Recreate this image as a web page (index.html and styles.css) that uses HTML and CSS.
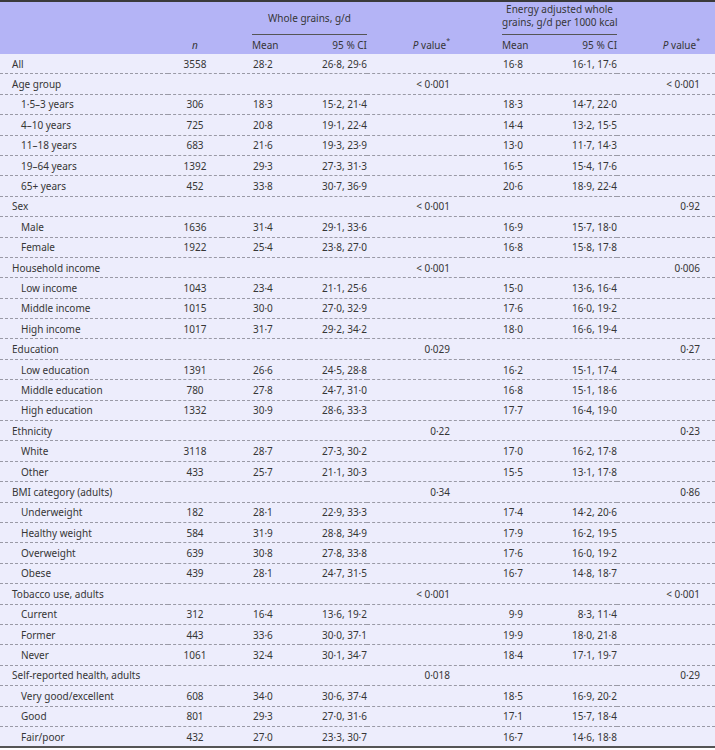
FILE: index.html
```html
<!DOCTYPE html>
<html>
<head>
<meta charset="utf-8">
<link rel="stylesheet" href="styles.css">
</head>
<body>
<table class="t">
<colgroup>
<col class="c-label"><col class="c-n"><col class="c-mean1"><col class="c-ci1"><col class="c-p1"><col class="c-mean2"><col class="c-ci2"><col class="c-p2">
</colgroup>
<thead>
<tr class="h1">
<th></th><th></th>
<th colspan="2" class="grp g1"><div class="grp-in one">Whole grains, g/d</div></th>
<th></th>
<th colspan="2" class="grp g2"><div class="grp-in two">Energy adjusted whole<br>grains, g/d per 1000 kcal</div></th>
<th></th>
</tr>
<tr class="h2">
<th></th><th class="n"><i>n</i></th><th class="mean1">Mean</th><th class="ci">95 % CI</th><th class="p1"><i>P</i> value<sup>*</sup></th><th class="mean2">Mean</th><th class="ci">95 % CI</th><th class="p2"><i>P</i> value<sup>*</sup></th>
</tr>
</thead>
<tbody>
<tr><td class="lab">All</td><td class="n">3558</td><td class="mean1">28·2</td><td class="ci">26·8, 29·6</td><td class="p1"></td><td class="mean2">16·8</td><td class="ci">16·1, 17·6</td><td class="p2"></td></tr>
<tr><td class="lab">Age group</td><td></td><td></td><td></td><td class="p1">&lt; 0·001</td><td></td><td></td><td class="p2">&lt; 0·001</td></tr>
<tr><td class="lab sub">1·5–3 years</td><td class="n">306</td><td class="mean1">18·3</td><td class="ci">15·2, 21·4</td><td class="p1"></td><td class="mean2">18·3</td><td class="ci">14·7, 22·0</td><td class="p2"></td></tr>
<tr><td class="lab sub">4–10 years</td><td class="n">725</td><td class="mean1">20·8</td><td class="ci">19·1, 22·4</td><td class="p1"></td><td class="mean2">14·4</td><td class="ci">13·2, 15·5</td><td class="p2"></td></tr>
<tr><td class="lab sub">11–18 years</td><td class="n">683</td><td class="mean1">21·6</td><td class="ci">19·3, 23·9</td><td class="p1"></td><td class="mean2">13·0</td><td class="ci">11·7, 14·3</td><td class="p2"></td></tr>
<tr><td class="lab sub">19–64 years</td><td class="n">1392</td><td class="mean1">29·3</td><td class="ci">27·3, 31·3</td><td class="p1"></td><td class="mean2">16·5</td><td class="ci">15·4, 17·6</td><td class="p2"></td></tr>
<tr><td class="lab sub">65+ years</td><td class="n">452</td><td class="mean1">33·8</td><td class="ci">30·7, 36·9</td><td class="p1"></td><td class="mean2">20·6</td><td class="ci">18·9, 22·4</td><td class="p2"></td></tr>
<tr><td class="lab">Sex</td><td></td><td></td><td></td><td class="p1">&lt; 0·001</td><td></td><td></td><td class="p2">0·92</td></tr>
<tr><td class="lab sub">Male</td><td class="n">1636</td><td class="mean1">31·4</td><td class="ci">29·1, 33·6</td><td class="p1"></td><td class="mean2">16·9</td><td class="ci">15·7, 18·0</td><td class="p2"></td></tr>
<tr><td class="lab sub">Female</td><td class="n">1922</td><td class="mean1">25·4</td><td class="ci">23·8, 27·0</td><td class="p1"></td><td class="mean2">16·8</td><td class="ci">15·8, 17·8</td><td class="p2"></td></tr>
<tr><td class="lab">Household income</td><td></td><td></td><td></td><td class="p1">&lt; 0·001</td><td></td><td></td><td class="p2">0·006</td></tr>
<tr><td class="lab sub">Low income</td><td class="n">1043</td><td class="mean1">23·4</td><td class="ci">21·1, 25·6</td><td class="p1"></td><td class="mean2">15·0</td><td class="ci">13·6, 16·4</td><td class="p2"></td></tr>
<tr><td class="lab sub">Middle income</td><td class="n">1015</td><td class="mean1">30·0</td><td class="ci">27·0, 32·9</td><td class="p1"></td><td class="mean2">17·6</td><td class="ci">16·0, 19·2</td><td class="p2"></td></tr>
<tr><td class="lab sub">High income</td><td class="n">1017</td><td class="mean1">31·7</td><td class="ci">29·2, 34·2</td><td class="p1"></td><td class="mean2">18·0</td><td class="ci">16·6, 19·4</td><td class="p2"></td></tr>
<tr><td class="lab">Education</td><td></td><td></td><td></td><td class="p1">0·029</td><td></td><td></td><td class="p2">0·27</td></tr>
<tr><td class="lab sub">Low education</td><td class="n">1391</td><td class="mean1">26·6</td><td class="ci">24·5, 28·8</td><td class="p1"></td><td class="mean2">16·2</td><td class="ci">15·1, 17·4</td><td class="p2"></td></tr>
<tr><td class="lab sub">Middle education</td><td class="n">780</td><td class="mean1">27·8</td><td class="ci">24·7, 31·0</td><td class="p1"></td><td class="mean2">16·8</td><td class="ci">15·1, 18·6</td><td class="p2"></td></tr>
<tr><td class="lab sub">High education</td><td class="n">1332</td><td class="mean1">30·9</td><td class="ci">28·6, 33·3</td><td class="p1"></td><td class="mean2">17·7</td><td class="ci">16·4, 19·0</td><td class="p2"></td></tr>
<tr><td class="lab">Ethnicity</td><td></td><td></td><td></td><td class="p1">0·22</td><td></td><td></td><td class="p2">0·23</td></tr>
<tr><td class="lab sub">White</td><td class="n">3118</td><td class="mean1">28·7</td><td class="ci">27·3, 30·2</td><td class="p1"></td><td class="mean2">17·0</td><td class="ci">16·2, 17·8</td><td class="p2"></td></tr>
<tr><td class="lab sub">Other</td><td class="n">433</td><td class="mean1">25·7</td><td class="ci">21·1, 30·3</td><td class="p1"></td><td class="mean2">15·5</td><td class="ci">13·1, 17·8</td><td class="p2"></td></tr>
<tr><td class="lab">BMI category (adults)</td><td></td><td></td><td></td><td class="p1">0·34</td><td></td><td></td><td class="p2">0·86</td></tr>
<tr><td class="lab sub">Underweight</td><td class="n">182</td><td class="mean1">28·1</td><td class="ci">22·9, 33·3</td><td class="p1"></td><td class="mean2">17·4</td><td class="ci">14·2, 20·6</td><td class="p2"></td></tr>
<tr><td class="lab sub">Healthy weight</td><td class="n">584</td><td class="mean1">31·9</td><td class="ci">28·8, 34·9</td><td class="p1"></td><td class="mean2">17·9</td><td class="ci">16·2, 19·5</td><td class="p2"></td></tr>
<tr><td class="lab sub">Overweight</td><td class="n">639</td><td class="mean1">30·8</td><td class="ci">27·8, 33·8</td><td class="p1"></td><td class="mean2">17·6</td><td class="ci">16·0, 19·2</td><td class="p2"></td></tr>
<tr><td class="lab sub">Obese</td><td class="n">439</td><td class="mean1">28·1</td><td class="ci">24·7, 31·5</td><td class="p1"></td><td class="mean2">16·7</td><td class="ci">14·8, 18·7</td><td class="p2"></td></tr>
<tr><td class="lab">Tobacco use, adults</td><td></td><td></td><td></td><td class="p1">&lt; 0·001</td><td></td><td></td><td class="p2">&lt; 0·001</td></tr>
<tr><td class="lab sub">Current</td><td class="n">312</td><td class="mean1">16·4</td><td class="ci">13·6, 19·2</td><td class="p1"></td><td class="mean2">&#8199;9·9</td><td class="ci">8·3, 11·4</td><td class="p2"></td></tr>
<tr><td class="lab sub">Former</td><td class="n">443</td><td class="mean1">33·6</td><td class="ci">30·0, 37·1</td><td class="p1"></td><td class="mean2">19·9</td><td class="ci">18·0, 21·8</td><td class="p2"></td></tr>
<tr><td class="lab sub">Never</td><td class="n">1061</td><td class="mean1">32·4</td><td class="ci">30·1, 34·7</td><td class="p1"></td><td class="mean2">18·4</td><td class="ci">17·1, 19·7</td><td class="p2"></td></tr>
<tr><td class="lab">Self-reported health, adults</td><td></td><td></td><td></td><td class="p1">0·018</td><td></td><td></td><td class="p2">0·29</td></tr>
<tr><td class="lab sub">Very good/excellent</td><td class="n">608</td><td class="mean1">34·0</td><td class="ci">30·6, 37·4</td><td class="p1"></td><td class="mean2">18·5</td><td class="ci">16·9, 20·2</td><td class="p2"></td></tr>
<tr><td class="lab sub">Good</td><td class="n">801</td><td class="mean1">29·3</td><td class="ci">27·0, 31·6</td><td class="p1"></td><td class="mean2">17·1</td><td class="ci">15·7, 18·4</td><td class="p2"></td></tr>
<tr><td class="lab sub">Fair/poor</td><td class="n">432</td><td class="mean1">27·0</td><td class="ci">23·3, 30·7</td><td class="p1"></td><td class="mean2">16·7</td><td class="ci">14·6, 18·8</td><td class="p2"></td></tr>
</tbody>
</table>
</body>
</html>
```
FILE: styles.css
```css
html, body {
  margin: 0;
  padding: 0;
  background: #ffffff;
}
.t {
  width: 715px;
  border-collapse: collapse;
  table-layout: fixed;
  font-family: "Noto Sans", "Open Sans", sans-serif;
  font-size: 10px;
  color: #363636;
  background: #ededfc;
  border-top: 2px solid #3a3a3a;
  border-bottom: 2px solid #555555;
}
.c-label { width: 168px; }
.c-n { width: 54px; }
.c-mean1 { width: 78px; }
.c-ci1 { width: 67px; }
.c-p1 { width: 95px; }
.c-mean2 { width: 88px; }
.c-ci2 { width: 67px; }
.c-p2 { width: 98px; }

thead th {
  background: #b4b4f6;
  font-weight: normal;
  padding: 0;
  white-space: nowrap;
}
.h1 th {
  height: 33px;
  vertical-align: bottom;
}
.grp { text-align: center; }
.g1 { padding-left: 30px !important; }
.g2 { padding-left: 40px !important; }
.grp-in {
  display: block;
  border-bottom: 1px solid #555555;
  line-height: 13px;
}
.grp-in.one { padding-bottom: 9px; }
.grp-in.two { padding-bottom: 5px; }
.h2 th {
  height: 19px;
  vertical-align: middle;
}
sup {
  font-size: 7px;
  vertical-align: top;
  position: relative;
  top: -2px;
}

tbody td {
  height: 19.4px;
  padding: 0;
  border-bottom: 1px dashed #9a9aa6;
  white-space: nowrap;
  vertical-align: middle;
}
tbody tr:last-child td { border-bottom: none; }

.lab { padding-left: 12px !important; text-align: left; }
.lab.sub { padding-left: 21px !important; }
.n { text-align: center; }
.mean1 { text-align: left; padding-left: 31px !important; }
.mean2 { text-align: left; padding-left: 41px !important; }
.ci { text-align: right; }
.p1 { text-align: right; padding-right: 12px !important; }
.p2 { text-align: right; padding-right: 15px !important; }
thead .mean1 { padding-left: 30px !important; }
thead .mean2 { padding-left: 40px !important; }
```
